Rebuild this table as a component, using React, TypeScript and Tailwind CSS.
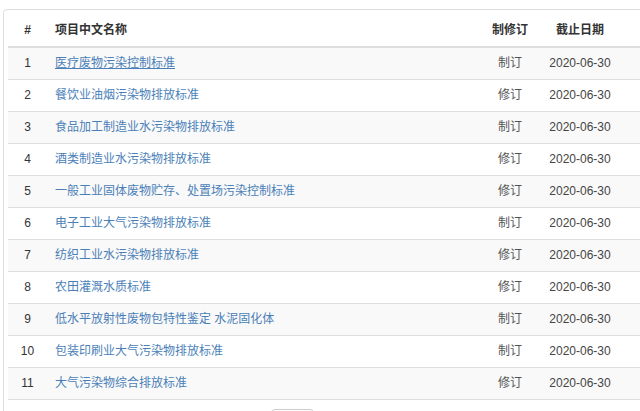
const rows = [
  { name: "医疗废物污染控制标准", kind: "制订" },
  { name: "餐饮业油烟污染物排放标准", kind: "修订" },
  { name: "食品加工制造业水污染物排放标准", kind: "制订" },
  { name: "酒类制造业水污染物排放标准", kind: "修订" },
  { name: "一般工业固体废物贮存、处置场污染控制标准", kind: "修订" },
  { name: "电子工业大气污染物排放标准", kind: "制订" },
  { name: "纺织工业水污染物排放标准", kind: "修订" },
  { name: "农田灌溉水质标准", kind: "修订" },
  { name: "低水平放射性废物包特性鉴定 水泥固化体", kind: "制订" },
  { name: "包装印刷业大气污染物排放标准", kind: "制订" },
  { name: "大气污染物综合排放标准", kind: "修订" },
];

export default function App() {
  return (
    <div
      className="w-[640px] h-[411px] overflow-hidden bg-white text-[12px] text-[#333]"
      style={{ fontFamily: '"Liberation Sans", "Noto Sans CJK SC", sans-serif' }}
    >
      {/* 面板 */}
      <div className="ml-[3px] mt-[9px] w-[700px] border border-[#ddd] rounded-[4px] pl-[4px] pt-[4px]">
        <table className="w-[640px] border-collapse table-fixed">
          <colgroup>
            <col className="w-[39px]" />
            <col className="w-[431px]" />
            <col className="w-[64px]" />
            <col className="w-[76px]" />
            <col className="w-[30px]" />
          </colgroup>
          <thead>
            <tr className="h-[33px] border-b-2 border-[#ddd]">
              <th className="text-center font-bold">#</th>
              <th className="text-left font-bold pl-[8px]">项目中文名称</th>
              <th className="text-center font-bold">制修订</th>
              <th className="text-center font-bold">截止日期</th>
              <th></th>
            </tr>
          </thead>
          <tbody>
            {rows.map((r, i) => (
              <tr
                key={i}
                className={`h-[32px] border-b border-[#ddd] ${i % 2 === 0 ? "bg-[#f9f9f9]" : "bg-white"}`}
              >
                <td className="text-center">{i + 1}</td>
                <td className="pl-[8px]">
                  <a
                    href="#"
                    className={`text-[#4a7fb8] ${i === 0 ? "underline" : "no-underline"}`}
                  >
                    {r.name}
                  </a>
                </td>
                <td className="text-center text-[#555]">{r.kind}</td>
                <td className="text-center text-[#444]">2020-06-30</td>
                <td></td>
              </tr>
            ))}
          </tbody>
        </table>

        {/* 分页 */}
        <div className="mt-[9px] pl-[263px]">
          <div className="w-[43px] h-[30px] border border-[#ccc] rounded-[4px] bg-white"></div>
        </div>
      </div>
    </div>
  );
}
